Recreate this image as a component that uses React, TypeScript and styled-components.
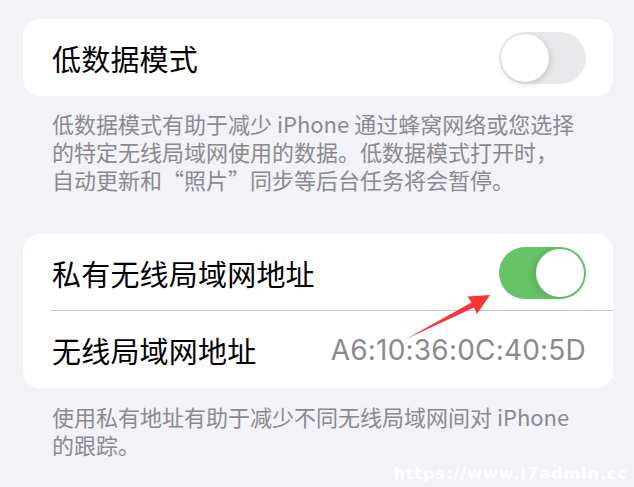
import React from "react";
import styled, { createGlobalStyle } from "styled-components";

const GlobalStyle = createGlobalStyle`
    html, body {
        margin: 0;
        padding: 0;
        background: #f2f2f7;
    }
    body {
        font-family: "Noto Sans CJK SC", "Noto Sans", sans-serif;
        -webkit-font-smoothing: antialiased;
    }
`;

const Page = styled.div`
    position: relative;
    width: 634px;
    height: 487px;
    overflow: hidden;
    box-sizing: border-box;
    padding: 19px 21px 0 23px;
    background: #f2f2f7;
`;

const Card = styled.div<{ $gap?: number }>`
    background: #ffffff;
    border-radius: 17px;
    margin-top: ${(props) => props.$gap ?? 0}px;
    overflow: hidden;
`;

const Row = styled.div<{ $divider?: boolean }>`
    position: relative;
    height: 77px;
    display: flex;
    align-items: center;
    justify-content: space-between;
    padding: 0 27px 0 29px;
    &::after {
        content: "";
        display: ${(props) => (props.$divider ? "block" : "none")};
        position: absolute;
        left: 28px;
        right: 0;
        bottom: 0;
        height: 1px;
        background: #c8c8cc;
    }
`;

const Label = styled.span`
    font-size: 29px;
    color: #000000;
    letter-spacing: 0.2px;
`;

const Value = styled.span`
    font-family: "Inter", "Liberation Sans", sans-serif;
    font-size: 28px;
    color: #8a8a8e;
    letter-spacing: 0.2px;
`;

const Footnote = styled.p<{ $top: number }>`
    margin: ${(props) => props.$top}px 0 0;
    padding: 0 29px;
    font-size: 22px;
    line-height: 28px;
    color: #8a8a8e;
    white-space: nowrap;
`;

const Track = styled.div<{ $on: boolean }>`
    position: relative;
    width: 87px;
    height: 52px;
    border-radius: 26px;
    background: ${(props) => (props.$on ? "#65c466" : "#e9e9eb")};
    flex-shrink: 0;
`;

const Knob = styled.div<{ $on: boolean }>`
    position: absolute;
    top: 2px;
    left: ${(props) => (props.$on ? "37px" : "2px")};
    width: 48px;
    height: 48px;
    border-radius: 50%;
    background: #ffffff;
    box-shadow: ${(props) =>
        props.$on
            ? "-3px 1px 6px rgba(0, 0, 0, 0.12)"
            : "2px 2px 6px rgba(0, 0, 0, 0.14), 0 0 1px rgba(0, 0, 0, 0.1)"};
`;

const Watermark = styled.div`
    position: absolute;
    right: 6px;
    bottom: 4px;
    font-family: "DejaVu Sans", sans-serif;
    font-weight: 700;
    font-size: 16px;
    letter-spacing: 1px;
    color: rgba(255, 255, 255, 0.95);
`;

const ArrowLayer = styled.svg`
    position: absolute;
    left: 0;
    top: 0;
    pointer-events: none;
`;

const Toggle: React.FC<{ on: boolean }> = ({ on }) => (
    <Track $on={on}>
        <Knob $on={on} />
    </Track>
);

const App: React.FC = () => {
    return (
        <>
            <GlobalStyle />
            <Page>
                <Card>
                    <Row>
                        <Label>低数据模式</Label>
                        <Toggle on={false} />
                    </Row>
                </Card>
                <Footnote $top={13}>
                    低数据模式有助于减少 iPhone 通过蜂窝网络或您选择
                    <br />
                    的特定无线局域网使用的数据。低数据模式打开时，
                    <br />
                    自动更新和“照片”同步等后台任务将会暂停。
                </Footnote>
                <Card $gap={41}>
                    <Row $divider>
                        <Label>私有无线局域网地址</Label>
                        <Toggle on />
                    </Row>
                    <Row>
                        <Label>无线局域网地址</Label>
                        <Value>A6:10:36:0C:40:5D</Value>
                    </Row>
                </Card>
                <Footnote $top={14}>
                    使用私有地址有助于减少不同无线局域网间对 iPhone
                    <br />
                    的跟踪。
                </Footnote>
                <ArrowLayer width="634" height="487" viewBox="0 0 634 487">
                    <polygon
                        points="406,339 471.5,302.5 467.5,296.5 490,295 477,314 474,307.5"
                        fill="#fb3535"
                    />
                </ArrowLayer>
                <Watermark>https://www.l7admin.cc</Watermark>
            </Page>
        </>
    );
};

export default App;
